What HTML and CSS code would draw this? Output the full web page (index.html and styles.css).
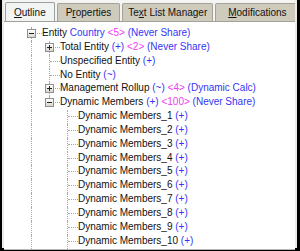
FILE: index.html
```html
<!DOCTYPE html>
<html lang="en">
<head>
    <meta charset="UTF-8">
    <title>Outline</title>
    <link rel="stylesheet" href="styles.css">
</head>
<body>
    <div class="window">
        <!-- Tab strip -->
        <div class="tabs">
            <div class="tab active"><u>O</u>utline</div>
            <div class="tab">P<u>r</u>operties</div>
            <div class="tab tab-narrow">Te<u>x</u>t List Manager</div>
            <div class="tab tab-wide"><u>M</u>odifications</div>
        </div>

        <!-- Outline tree -->
        <div class="panel">
            <div class="tree">
                <div class="row">
                    <span class="cell tee"><span class="box minus"></span></span>
                    <span class="label">Entity <span class="blue">Country</span> <span class="pink">&lt;5&gt;</span> <span class="blue">(Never Share)</span></span>
                </div>
                <div class="row">
                    <span class="cell pipe"></span>
                    <span class="cell tee"><span class="box plus"></span></span>
                    <span class="label">Total Entity <span class="blue">(+)</span> <span class="pink">&lt;2&gt;</span> <span class="blue">(Never Share)</span></span>
                </div>
                <div class="row">
                    <span class="cell pipe"></span>
                    <span class="cell tee"></span>
                    <span class="label">Unspecified Entity <span class="blue">(+)</span></span>
                </div>
                <div class="row">
                    <span class="cell pipe"></span>
                    <span class="cell tee"></span>
                    <span class="label">No Entity <span class="blue">(~)</span></span>
                </div>
                <div class="row">
                    <span class="cell pipe"></span>
                    <span class="cell tee"><span class="box plus"></span></span>
                    <span class="label">Management Rollup <span class="blue">(~)</span> <span class="pink">&lt;4&gt;</span> <span class="blue">(Dynamic Calc)</span></span>
                </div>
                <div class="row">
                    <span class="cell pipe"></span>
                    <span class="cell elbow"><span class="box minus"></span></span>
                    <span class="label">Dynamic Members <span class="blue">(+)</span> <span class="pink">&lt;100&gt;</span> <span class="blue">(Never Share)</span></span>
                </div>
                <div class="row">
                    <span class="cell pipe"></span><span class="cell"></span><span class="cell tee"></span>
                    <span class="label">Dynamic Members_1 <span class="blue">(+)</span></span>
                </div>
                <div class="row">
                    <span class="cell pipe"></span><span class="cell"></span><span class="cell tee"></span>
                    <span class="label">Dynamic Members_2 <span class="blue">(+)</span></span>
                </div>
                <div class="row">
                    <span class="cell pipe"></span><span class="cell"></span><span class="cell tee"></span>
                    <span class="label">Dynamic Members_3 <span class="blue">(+)</span></span>
                </div>
                <div class="row">
                    <span class="cell pipe"></span><span class="cell"></span><span class="cell tee"></span>
                    <span class="label">Dynamic Members_4 <span class="blue">(+)</span></span>
                </div>
                <div class="row">
                    <span class="cell pipe"></span><span class="cell"></span><span class="cell tee"></span>
                    <span class="label">Dynamic Members_5 <span class="blue">(+)</span></span>
                </div>
                <div class="row">
                    <span class="cell pipe"></span><span class="cell"></span><span class="cell tee"></span>
                    <span class="label">Dynamic Members_6 <span class="blue">(+)</span></span>
                </div>
                <div class="row">
                    <span class="cell pipe"></span><span class="cell"></span><span class="cell tee"></span>
                    <span class="label">Dynamic Members_7 <span class="blue">(+)</span></span>
                </div>
                <div class="row">
                    <span class="cell pipe"></span><span class="cell"></span><span class="cell tee"></span>
                    <span class="label">Dynamic Members_8 <span class="blue">(+)</span></span>
                </div>
                <div class="row">
                    <span class="cell pipe"></span><span class="cell"></span><span class="cell tee"></span>
                    <span class="label">Dynamic Members_9 <span class="blue">(+)</span></span>
                </div>
                <div class="row">
                    <span class="cell pipe"></span><span class="cell"></span><span class="cell tee"></span>
                    <span class="label">Dynamic Members_10 <span class="blue">(+)</span></span>
                </div>
            </div>
        </div>
    </div>
</body>
</html>
```

FILE: styles.css
```css
body {
    margin: 0;
    padding: 0;
    font-family: "Liberation Sans", Arial, sans-serif;
    font-size: 10px;
    color: #111;
    background: #fff;
}

/* Outer window frame */
.window {
    width: 300px;
    height: 251px;
    box-sizing: border-box;
    border-left: 2px solid #000;
    border-right: 3px solid #000;
    border-bottom: 3px solid #000;
    padding: 0 2px 2px 2px;
    background: #ecebe6;
    display: flex;
    flex-direction: column;
}

/* Tabs */
.tabs {
    height: 21px;
    flex: none;
    display: flex;
    align-items: flex-end;
    padding-left: 1px;
    background: #f4f4f2;
    white-space: nowrap;
    overflow: hidden;
}

.tab {
    flex: none;
    height: 17px;
    line-height: 17px;
    padding: 0 8px;
    margin-right: 2px;
    background: #cecbbd;
    border: 1px solid #a3a29a;
    border-bottom: none;
    border-radius: 2px 2px 0 0;
    color: #111;
}

.tab.tab-narrow {
    padding: 0 5px;
}

.tab.tab-wide {
    padding: 0 13px 0 12px;
    margin-right: 0;
}

.tab.active {
    height: 19px;
    line-height: 19px;
    background: #f2f3f3;
    border-color: #9aa0a0;
    position: relative;
    top: 1px;
}

/* Panel */
.panel {
    flex: 1;
    background: #fff;
    border-top: 1px solid #a3a29a;
    border-bottom: 1px solid #b9b8b2;
    overflow: clip;
    overflow-clip-margin: 1px;
}

.tree {
    padding: 5px 0 0 19px;
}

.row {
    display: flex;
    height: 13.85px;
    line-height: 12px;
    white-space: nowrap;
}

.cell {
    position: relative;
    flex: none;
    width: 18px;
    height: 100%;
}

/* Dotted guide lines */
.cell.pipe::before,
.cell.tee::before,
.cell.elbow::before {
    content: "";
    position: absolute;
    left: 8px;
    top: 0;
    bottom: 0;
    border-left: 1px dotted #a8a8a8;
}

.cell.elbow::before {
    bottom: auto;
    height: 6px;
}

.cell.tee::after,
.cell.elbow::after {
    content: "";
    position: absolute;
    left: 9px;
    right: -1px;
    top: 6px;
    border-top: 1px dotted #a8a8a8;
}

/* Expand / collapse boxes */
.box {
    position: absolute;
    z-index: 1;
    left: 4px;
    top: 2px;
    width: 7px;
    height: 7px;
    border: 1px solid #8e8f8f;
    background: linear-gradient(#ffffff, #d9d6cc);
}

.box::before,
.box::after {
    content: "";
    position: absolute;
    background: #222;
}

.box::before {
    left: 1px;
    top: 3px;
    width: 5px;
    height: 1px;
}

.box.plus::after {
    left: 3px;
    top: 1px;
    width: 1px;
    height: 5px;
}

.label {
    margin-left: 1px;
}

.blue {
    color: #3535f5;
}

.pink {
    color: #f03cf0;
}
```
